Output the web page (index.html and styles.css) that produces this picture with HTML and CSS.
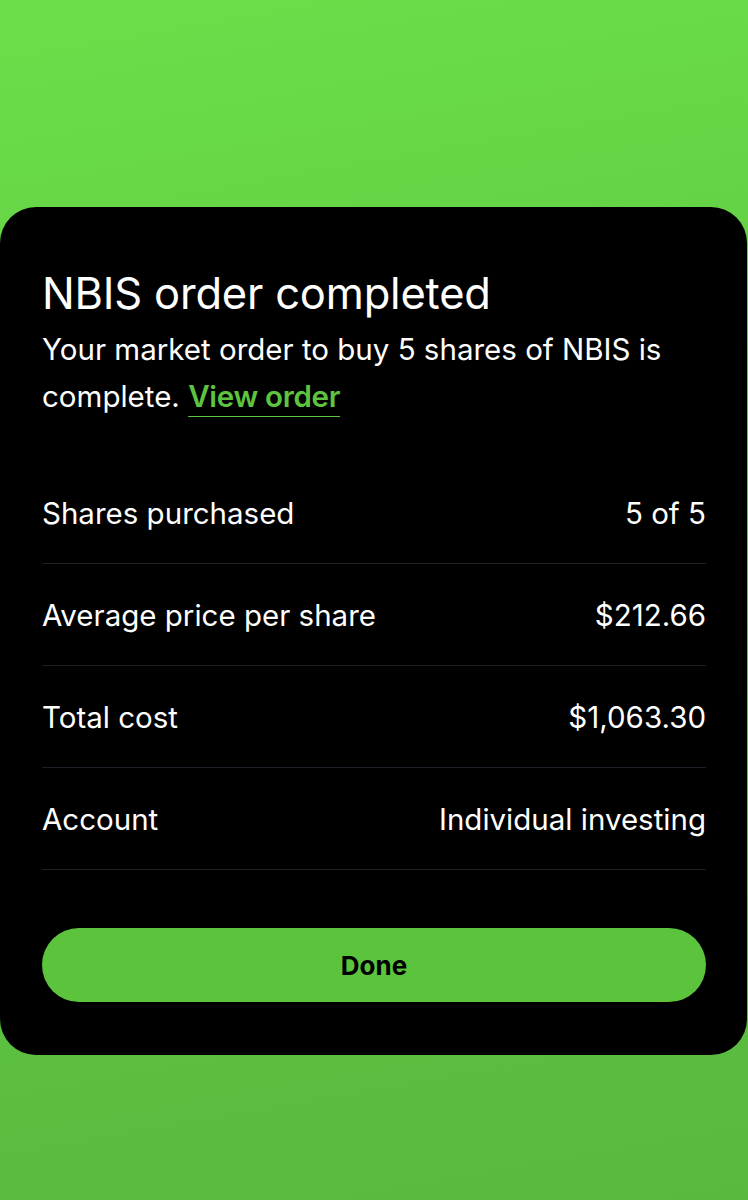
FILE: index.html
```html
<!DOCTYPE html>
<html lang="en">
<head>
    <meta charset="UTF-8">
    <meta name="viewport" content="width=device-width, initial-scale=1.0">
    <title>Order completed</title>
    <link rel="stylesheet" href="styles.css">
</head>
<body>
    <div class="sheet">
        <h1 class="title">NBIS order completed</h1>
        <p class="subtitle">Your market order to buy 5 shares of NBIS is complete. <a href="#" class="view-link">View order</a></p>

        <div class="details">
            <div class="row">
                <span>Shares purchased</span>
                <span>5 of 5</span>
            </div>
            <div class="row">
                <span>Average price per share</span>
                <span>$212.66</span>
            </div>
            <div class="row">
                <span>Total cost</span>
                <span>$1,063.30</span>
            </div>
            <div class="row">
                <span>Account</span>
                <span>Individual investing</span>
            </div>
        </div>

        <button class="done-btn">Done</button>
    </div>
</body>
</html>
```

FILE: styles.css
```css
html, body {
    height: 100%;
}
body {
    margin: 0;
    background: linear-gradient(170deg, #6bdf4a 0%, #60c942 45%, #59b93e 100%);
    font-family: "Inter", "Liberation Sans", sans-serif;
    color: #fff;
    padding-top: 207px;
    box-sizing: border-box;
}
.sheet {
    background: #000;
    margin: 0 1px 0 0;
    border-radius: 36px;
    padding: 48px 41px 54px 42px;
    height: 848px;
    box-sizing: border-box;
}
.title {
    font-size: 43.5px;
    font-weight: 400;
    letter-spacing: -0.2px;
    margin: 0;
    line-height: 76px;
}
.subtitle {
    font-size: 29.5px;
    line-height: 47px;
    margin: -5px 0 0;
}
.view-link {
    color: #5ec43f;
    font-weight: 600;
    letter-spacing: -0.3px;
    text-decoration: underline;
    text-decoration-thickness: 1px;
    text-underline-offset: 9px;
}
.details {
    margin-top: 42px;
}
.row {
    display: flex;
    justify-content: space-between;
    align-items: center;
    height: 102px;
    border-bottom: 1px solid #1d2026;
    font-size: 29.5px;
    box-sizing: border-box;
}
.done-btn {
    display: block;
    width: 100%;
    height: 74px;
    margin-top: 58px;
    border: none;
    border-radius: 37px;
    background: #5bc43c;
    color: #000;
    font-family: "Inter", "Liberation Sans", sans-serif;
    font-size: 26px;
    font-weight: 700;
    cursor: pointer;
}
```
